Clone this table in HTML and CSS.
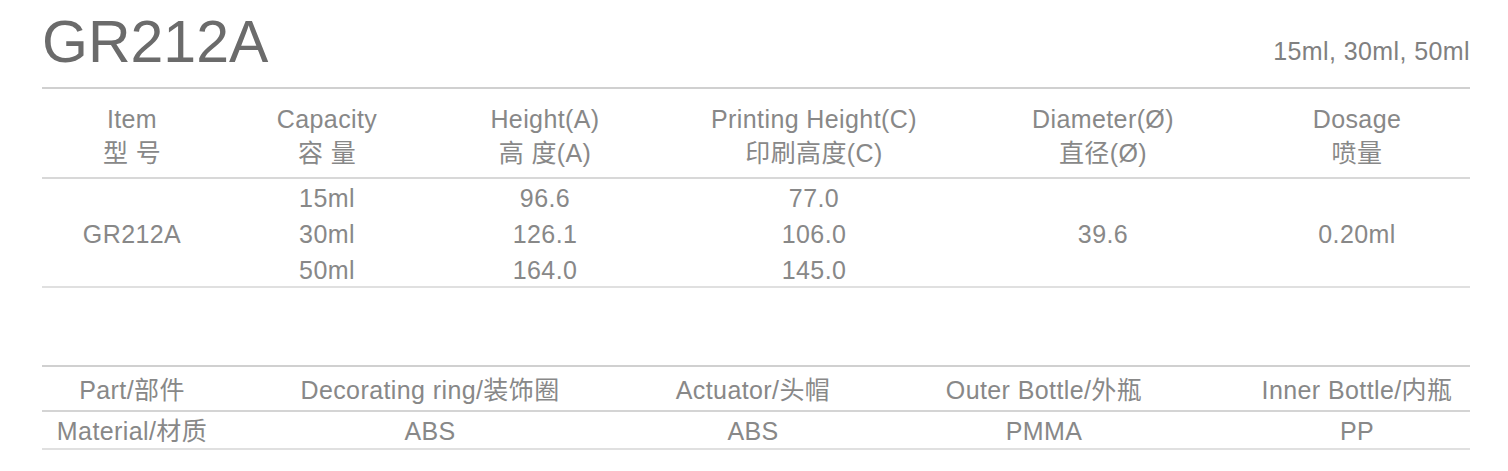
FILE: index.html
```html
<!DOCTYPE html>
<html lang="zh">
<head>
<meta charset="utf-8">
<title>GR212A</title>
<link rel="stylesheet" href="styles.css">
</head>
<body>
<div class="page">
  <header class="head">
    <h1 class="title">GR212A</h1>
    <div class="sizes">15ml, 30ml, 50ml</div>
  </header>

  <section class="spec">
    <div class="spec-head">
      <div class="cell">Item<br>型 号</div>
      <div class="cell">Capacity<br>容 量</div>
      <div class="cell">Height(A)<br>高 度(A)</div>
      <div class="cell">Printing Height(C)<br>印刷高度(C)</div>
      <div class="cell">Diameter(Ø)<br>直径(Ø)</div>
      <div class="cell last">Dosage<br>喷量</div>
    </div>
    <div class="spec-body">
      <div class="cell mid">GR212A</div>
      <div class="cell">15ml<br>30ml<br>50ml</div>
      <div class="cell">96.6<br>126.1<br>164.0</div>
      <div class="cell">77.0<br>106.0<br>145.0</div>
      <div class="cell mid">39.6</div>
      <div class="cell mid last">0.20ml</div>
    </div>
  </section>

  <section class="parts">
    <div class="parts-row part-row">
      <div class="cell">Part/部件</div>
      <div class="cell">Decorating ring/装饰圈</div>
      <div class="cell">Actuator/头帽</div>
      <div class="cell">Outer Bottle/外瓶</div>
      <div class="cell last">Inner Bottle/内瓶</div>
    </div>
    <div class="parts-row mat-row">
      <div class="cell">Material/材质</div>
      <div class="cell">ABS</div>
      <div class="cell">ABS</div>
      <div class="cell">PMMA</div>
      <div class="cell last">PP</div>
    </div>
  </section>
</div>
</body>
</html>
```

FILE: styles.css
```css
* { box-sizing: border-box; margin: 0; padding: 0; }

html, body {
  background: #ffffff;
}

body {
  font-family: "Liberation Sans", "Noto Sans CJK SC", Arial, sans-serif;
  color: #888888;
  font-size: 25px;
  letter-spacing: 0.4px;
}

.page {
  width: 1508px;
  padding: 13px 38px 0 42px;
}

.head {
  display: flex;
  justify-content: space-between;
  align-items: flex-end;
  padding-bottom: 15px;
}

.title {
  font-size: 59px;
  line-height: 59px;
  font-weight: normal;
  letter-spacing: 0;
  color: #6b6b6b;
}

.sizes {
  font-size: 25px;
  line-height: 30px;
  padding-bottom: 6px;
  color: #808080;
}

.cell {
  text-align: center;
  white-space: nowrap;
}

.spec {
  border-top: 2px solid #d0d0d0;
  border-bottom: 2px solid #e0e0e0;
}

.spec-head,
.spec-body {
  display: grid;
  grid-template-columns: 180px 210px 226px 312px 266px 234px;
}

.spec-head .last,
.spec-body .last {
  padding-left: 8px;
}

.spec-head {
  line-height: 34px;
  padding: 13px 0 7px;
  border-bottom: 2px solid #d8d8d8;
}

.spec-body {
  line-height: 36px;
  padding-top: 1px;
  height: 107px;
}

.mid {
  align-self: center;
}

.parts {
  margin-top: 77px;
  border-top: 2px solid #d0d0d0;
  border-bottom: 2px solid #e0e0e0;
}

.parts-row {
  display: grid;
  grid-template-columns: 180px 416px 230px 352px 250px;
}

.parts-row .last {
  padding-left: 24px;
}

.part-row {
  line-height: 40px;
  padding-top: 3px;
  border-bottom: 2px solid #d4d4d4;
}

.mat-row {
  line-height: 34px;
  padding-top: 2px;
}
```
